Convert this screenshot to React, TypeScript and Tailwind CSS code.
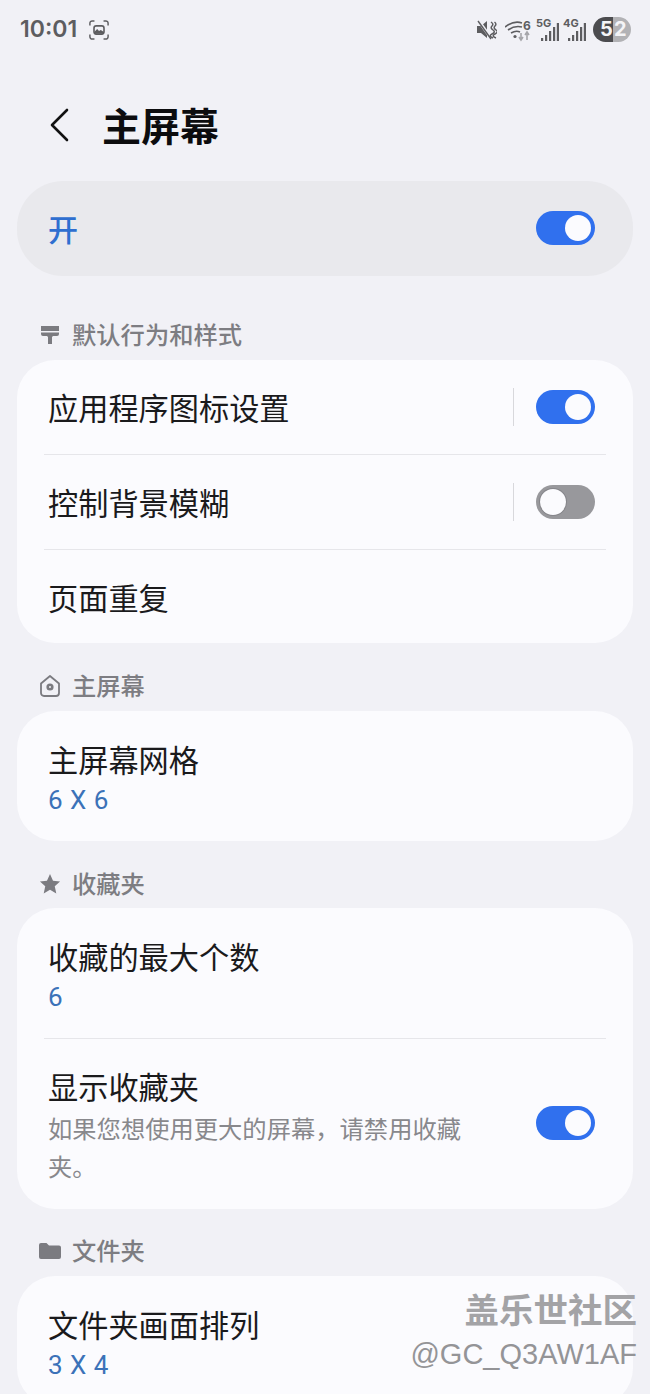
import type { ReactNode } from "react";

const cjk = "font-['Noto_Sans_CJK_SC',sans-serif]";

function Toggle({ on = true }: { on?: boolean }) {
  return (
    <div
      className={`flex h-[34px] w-[59px] shrink-0 rounded-full p-[4px] ${
        on ? "justify-end bg-[#3070ee]" : "justify-start bg-[#98989c]"
      }`}
    >
      <div className={`h-[26px] w-[26px] rounded-full ${on ? "bg-[#fbfbfe]" : "bg-[#fbfbfe] shadow-[0_0_0_1px_#85858a]"}`} />
    </div>
  );
}

function Signal({ label }: { label: string }) {
  return (
    <svg width="23" height="26" viewBox="0 0 23 26" fill="currentColor">
      <text x="0" y="10" fontSize="11" fontWeight="700" fontFamily="Inter, sans-serif">{label}</text>
      <rect x="5" y="21" width="2.200" height="3" />
      <rect x="9" y="18" width="2.200" height="6" />
      <rect x="13" y="14" width="2.200" height="10" />
      <rect x="17" y="10" width="2.200" height="14" />
      <rect x="20.800" y="6" width="2.200" height="18" />
    </svg>
  );
}

function StatusBar() {
  return (
    <div className="flex h-[58px] items-center justify-between pl-[20px] pr-[19px] pt-[1px] text-[#5d5d60]">
      <div className="flex items-center gap-[12px]">
        <span className="font-['Inter',sans-serif] text-[23px] font-semibold leading-none">10:01</span>
        <svg width="20" height="20" viewBox="0 0 22 22" fill="none" stroke="currentColor" strokeWidth="1.600">
          <path d="M1 6V3.500A2.500 2.500 0 0 1 3.500 1H6M16 1h2.500A2.500 2.500 0 0 1 21 3.500V6M21 16v2.500a2.500 2.500 0 0 1-2.500 2.500H16M6 21H3.500A2.500 2.500 0 0 1 1 18.500V16" />
          <rect x="5.500" y="6.500" width="11" height="9" rx="2.500" strokeWidth="1.800" />
          <path d="M6 13l3-3 2 2 2-1 3 2v2H6z" fill="currentColor" stroke="none" />
        </svg>
      </div>
      <div className="flex items-center">
        <svg width="20" height="22" viewBox="0 0 20 22" fill="currentColor">
          <path d="M0 7h4l6-5v17l-6-5H0z" />
          <path d="M1 1l13 18" stroke="#f1f1f6" strokeWidth="3" />
          <path d="M1 2l13 18" stroke="currentColor" strokeWidth="1.400" />
          <path d="M14 3q3 2 1 4t1 4-1 4 1 4M17.500 3q2.500 2 .5 4t1 4-1 4 1 4" fill="none" stroke="currentColor" strokeWidth="1.500" />
        </svg>
        <svg width="27" height="24" viewBox="0 0 27 24" className="ml-[8px]" fill="none" stroke="currentColor">
          <path d="M0 9q9-7 17-4M3 12q7-5 14-3M6 15q5-3 9-1" strokeWidth="1.600" />
          <circle cx="10" cy="18.500" r="1.600" fill="currentColor" stroke="none" />
          <path d="M16 15v6M14 19l2 3 2-3M22 22v-7M20 17l2-3 2 3" stroke="#a5a5a9" strokeWidth="1.600" />
          <text x="18" y="12" fontSize="12" fontWeight="700" fill="currentColor" stroke="none" fontFamily="Inter, sans-serif">6</text>
        </svg>
        <div className="ml-[4px]">
          <Signal label="5G" />
        </div>
        <div className="ml-[4px]">
          <Signal label="4G" />
        </div>
        <div className="ml-[7px] flex h-[25px] w-[38px] overflow-hidden rounded-full font-['Inter',sans-serif] text-[20px] font-bold leading-[25px] text-[#f4f4f6]">
          <div className="w-[20px] bg-[#4c4c4f] pl-[7px]">5</div>
          <div className="flex-1 bg-[#b2b2b5] pl-[1px]">2</div>
        </div>
      </div>
    </div>
  );
}

function SectionLabel({ icon, text }: { icon: ReactNode; text: string }) {
  return (
    <div className="flex h-[35px] items-center pl-[39px] pt-[2px]">
      <div className="flex w-[22px] justify-center text-[#7b7b80]">{icon}</div>
      <span className="ml-[11px] text-[24.3px] font-medium leading-none text-[#7d7d82]">{text}</span>
    </div>
  );
}

function Card({ children }: { children: ReactNode }) {
  return <div className="mx-[17px] rounded-[38px] bg-[#fbfbfe]">{children}</div>;
}

function Divider() {
  return <div className="mx-[27px] h-[1px] bg-[#e6e6ea]" />;
}

function ToggleRow({ title, on }: { title: string; on: boolean }) {
  return (
    <div className="flex h-[94px] items-center pl-[31px] pr-[38px]">
      <span className="flex-1 pt-[1px] text-[30.2px] leading-none text-[#1a1a1c]">{title}</span>
      <div className="mr-[22px] h-[38px] w-[1px] bg-[#d8d8dc]" />
      <Toggle on={on} />
    </div>
  );
}

function ValueRow({ title, value }: { title: string; value: string }) {
  return (
    <div className="flex h-[130px] flex-col justify-center pl-[31px] pt-[5px]">
      <span className="text-[30.2px] leading-[40px] text-[#1a1a1c]">{title}</span>
      <span className="mt-[2px] font-['Roboto',sans-serif] text-[26px] leading-[38px] tracking-[0.5px] text-[#3b72b8]">{value}</span>
    </div>
  );
}

export default function App() {
  return (
    <div className={`relative h-[1394px] w-[650px] overflow-hidden bg-[#f1f1f6] ${cjk}`}>
      <StatusBar />

      <div className="flex h-[123px] items-center pl-[49px] pt-[10px]">
        <svg width="20" height="34" viewBox="0 0 20 34" fill="none" stroke="#111" strokeWidth="2.600" strokeLinecap="round" strokeLinejoin="round">
          <path d="M18 2L3 17l15 15" />
        </svg>
        <h1 className="ml-[33px] text-[39px] font-bold leading-none text-[#0c0c0e]">主屏幕</h1>
      </div>

      <div className="mx-[17px] flex h-[95px] items-center rounded-[46px] bg-[#e9e9ed] pb-[2px] pl-[31px] pr-[38px]">
        <span className="flex-1 text-[30px] font-medium leading-none text-[#2f6fd0]">开</span>
        <Toggle />
      </div>

      <div className="mt-[40px]">
        <SectionLabel
          text="默认行为和样式"
          icon={
            <svg width="20" height="22" viewBox="0 0 20 22" fill="currentColor">
              <path d="M1 2h18v5H1zM1 8.500h18v1.500a2 2 0 0 1-2 2h-4l-1 1v7H8v-7l-1-1H3a2 2 0 0 1-2-2z" />
            </svg>
          }
        />
      </div>
      <div className="mt-[9px]">
        <Card>
          <ToggleRow title="应用程序图标设置" on={true} />
          <Divider />
          <ToggleRow title="控制背景模糊" on={false} />
          <Divider />
          <div className="flex h-[93px] items-center pl-[31px]">
            <span className="pt-[1px] text-[30.2px] leading-none text-[#1a1a1c]">页面重复</span>
          </div>
        </Card>
      </div>

      <div className="mt-[24px]">
        <SectionLabel
          text="主屏幕"
          icon={
            <svg width="22" height="24" viewBox="0 0 22 24" fill="none" stroke="currentColor" strokeWidth="1.800">
              <path d="M2 9.500L11 2l9 7.500V19a3 3 0 0 1-3 3H5a3 3 0 0 1-3-3z" strokeLinejoin="round" />
              <circle cx="11" cy="13" r="2.300" strokeWidth="2.600" />
            </svg>
          }
        />
      </div>
      <div className="mt-[9px]">
        <Card>
          <ValueRow title="主屏幕网格" value="6 X 6" />
        </Card>
      </div>

      <div className="mt-[24px]">
        <SectionLabel
          text="收藏夹"
          icon={
            <svg width="22" height="21" viewBox="0 0 24 23" fill="currentColor">
              <path d="M12 1l3.300 7.400 7.700.8-5.800 5.300 1.700 7.900L12 18.300 5.100 22.400l1.700-7.900L1 9.200l7.700-.8z" />
            </svg>
          }
        />
      </div>
      <div className="mt-[8px]">
        <Card>
          <ValueRow title="收藏的最大个数" value="6" />
          <Divider />
          <div className="flex h-[170px] items-start pl-[31px] pr-[38px] pt-[27px]">
            <div className="w-[430px]">
              <div className="text-[30.2px] leading-[40px] text-[#1a1a1c]">显示收藏夹</div>
              <div className="mt-[3px] text-[24.3px] leading-[38px] text-[#88888c]">如果您想使用更大的屏幕，请禁用收藏夹。</div>
            </div>
            <div className="ml-auto mt-[40px]">
              <Toggle />
            </div>
          </div>
        </Card>
      </div>

      <div className="mt-[23px]">
        <SectionLabel
          text="文件夹"
          icon={
            <svg width="22" height="18" viewBox="0 0 22 18" fill="currentColor">
              <path d="M0 3a2 2 0 0 1 2-2h5.500l2.500 2.500h10a2 2 0 0 1 2 2V15a2 2 0 0 1-2 2H2a2 2 0 0 1-2-2z" />
            </svg>
          }
        />
      </div>
      <div className="mt-[9px]">
        <Card>
          <ValueRow title="文件夹画面排列" value="3 X 4" />
        </Card>
      </div>

      <div className="absolute right-[13px] top-[1289px] text-right leading-none text-[#949497]">
        <div className="text-[34.5px] font-bold leading-[38px] text-[#a3a3a6]">盖乐世社区</div>
        <div className="mt-[9px] font-['Liberation_Sans',sans-serif] text-[29px] leading-[36px]">@GC_Q3AW1AF</div>
      </div>
    </div>
  );
}
